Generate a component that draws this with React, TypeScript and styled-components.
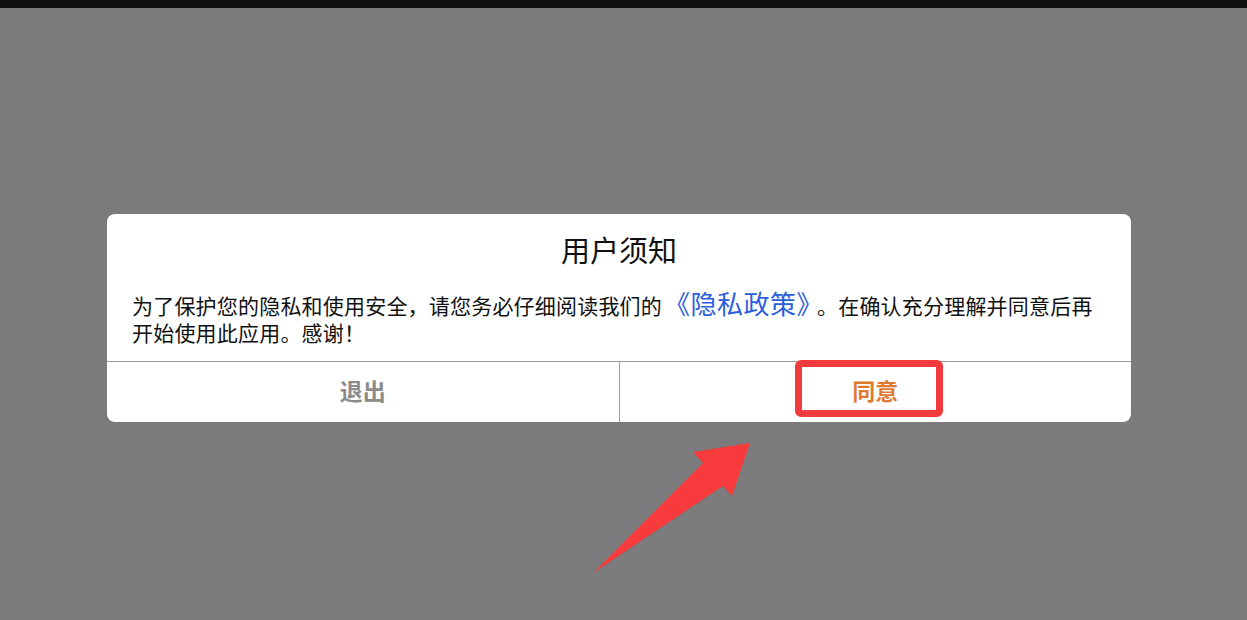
import styled, { createGlobalStyle } from "styled-components";

const GlobalStyle = createGlobalStyle`
  html, body {
    margin: 0;
    padding: 0;
    background: #7b7b7d;
  }
  body {
    font-family: "Noto Sans CJK SC", "Noto Sans", sans-serif;
  }
`;

const Screen = styled.div`
  position: relative;
  width: 1247px;
  height: 620px;
  background: #7b7b7d;
  overflow: hidden;
  display: flex;
  flex-direction: column;
`;

const TopBar = styled.div`
  height: 8px;
  background: #111111;
  flex-shrink: 0;
`;

const Stage = styled.div`
  flex: 1;
  display: flex;
  align-items: flex-start;
  padding: 206px 0 0 107px;
`;

const Dialog = styled.div`
  width: 1024px;
  height: 208px;
  background: #ffffff;
  border-radius: 8px;
  display: flex;
  flex-direction: column;
  overflow: hidden;
`;

const Title = styled.h2`
  margin: 0;
  padding-top: 15px;
  font-size: 29px;
  font-weight: 400;
  line-height: 40px;
  text-align: center;
  color: #111111;
`;

const Body = styled.p`
  margin: 0;
  padding: 21px 25px 0;
  height: 58px;
  font-size: 21px;
  line-height: 27px;
  color: #111111;
  letter-spacing: 0.2px;
`;

const PolicyLink = styled.span`
  font-size: 26px;
  color: #2c5edb;
  line-height: 26px;
  letter-spacing: 0.5px;
  margin: 0 7px 0 2px;
`;

const ButtonRow = styled.div`
  margin-top: auto;
  display: flex;
  height: 60px;
  border-top: 1px solid #9c9c9c;
`;

const ActionButton = styled.button<{ $primary?: boolean }>`
  flex: 1;
  border: none;
  background: transparent;
  font-family: inherit;
  font-size: 23px;
  font-weight: 700;
  color: ${(p) => (p.$primary ? "#df7a30" : "#8c8c8c")};
  border-left: ${(p) => (p.$primary ? "1px solid #9c9c9c" : "none")};
  padding: 0 0 4px;
  cursor: pointer;
`;

const Highlight = styled.div`
  position: absolute;
  left: 795px;
  top: 360px;
  width: 148px;
  height: 57px;
  box-sizing: border-box;
  border: 7px solid #f23b3c;
  border-radius: 6px;
  pointer-events: none;
`;

const ArrowSvg = styled.svg`
  position: absolute;
  left: 0;
  top: 0;
  pointer-events: none;
`;

export default function App() {
  return (
    <>
      <GlobalStyle />
      <Screen>
        <TopBar />
        <Stage>
          <Dialog>
            <Title>用户须知</Title>
            <Body>
              为了保护您的隐私和使用安全，请您务必仔细阅读我们的
              <PolicyLink>《隐私政策》</PolicyLink>
              。在确认充分理解并同意后再
              <br />
              开始使用此应用。感谢！
            </Body>
            <ButtonRow>
              <ActionButton>退出</ActionButton>
              <ActionButton $primary>同意</ActionButton>
            </ButtonRow>
          </Dialog>
        </Stage>
        <Highlight />
        <ArrowSvg width="1247" height="620" viewBox="0 0 1247 620">
          <polygon
            points="593,573 703,463 693,452 750,443 732,496 723,486"
            fill="#f73a3b"
          />
        </ArrowSvg>
      </Screen>
    </>
  );
}
